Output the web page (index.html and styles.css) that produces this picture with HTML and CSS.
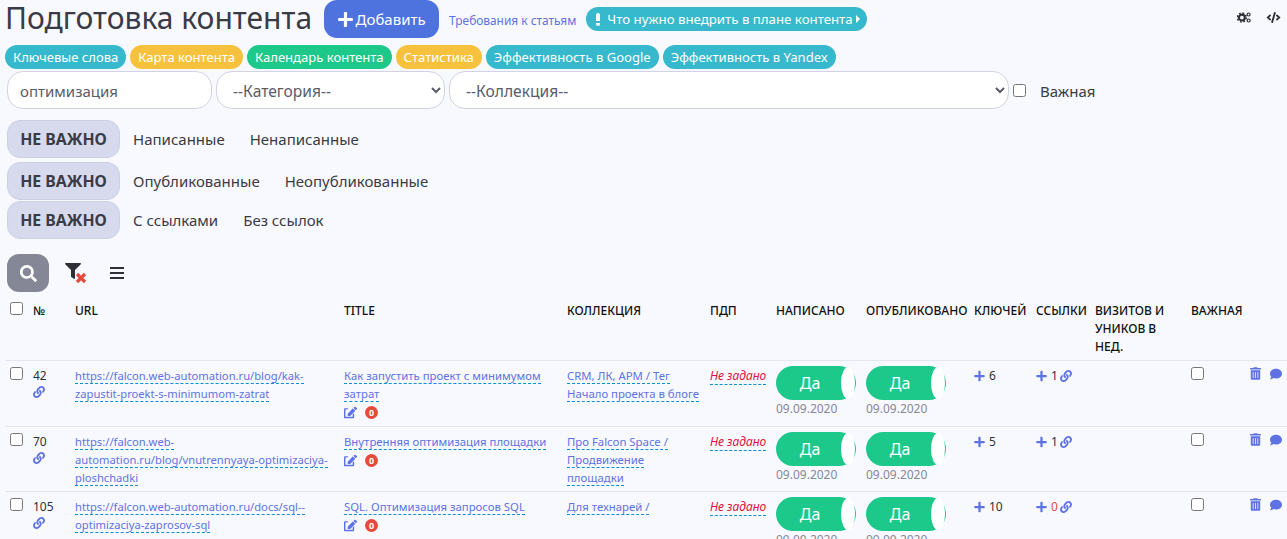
FILE: index.html
```html
<!DOCTYPE html>
<html lang="ru">
<head>
<meta charset="utf-8">
<title>Подготовка контента</title>
<link rel="stylesheet" href="styles.css">
</head>
<body>
<svg class="defs" width="0" height="0">
<symbol id="i-plus" viewBox="0 0 448 512"><path d="M416 208H272V64c0-17.67-14.33-32-32-32h-32c-17.67 0-32 14.33-32 32v144H32c-17.67 0-32 14.33-32 32v32c0 17.67 14.33 32 32 32h144v144c0 17.67 14.33 32 32 32h32c17.67 0 32-14.33 32-32V304h144c17.67 0 32-14.33 32-32v-32c0-17.67-14.33-32-32-32z"/></symbol>
<symbol id="i-search" viewBox="0 0 512 512"><path d="M505 442.7L405.3 343c-4.5-4.5-10.6-7-17-7H372c27.6-35.3 44-79.7 44-128C416 93.1 322.9 0 208 0S0 93.1 0 208s93.1 208 208 208c48.3 0 92.7-16.4 128-44v16.3c0 6.4 2.5 12.5 7 17l99.7 99.7c9.4 9.4 24.6 9.4 33.9 0l28.3-28.3c9.4-9.4 9.4-24.6.1-34zM208 336c-70.7 0-128-57.2-128-128 0-70.7 57.2-128 128-128 70.7 0 128 57.2 128 128 0 70.7-57.2 128-128 128z"/></symbol>
<symbol id="i-trash" viewBox="0 0 448 512"><path d="M32 464a48 48 0 0 0 48 48h288a48 48 0 0 0 48-48V128H32zm272-256a16 16 0 0 1 32 0v224a16 16 0 0 1-32 0zm-96 0a16 16 0 0 1 32 0v224a16 16 0 0 1-32 0zm-96 0a16 16 0 0 1 32 0v224a16 16 0 0 1-32 0zM432 32H312l-9.4-18.7A24 24 0 0 0 281.1 0H166.8a23.72 23.72 0 0 0-21.4 13.3L136 32H16A16 16 0 0 0 0 48v32a16 16 0 0 0 16 16h416a16 16 0 0 0 16-16V48a16 16 0 0 0-16-16z"/></symbol>
<symbol id="i-comment" viewBox="0 0 512 512"><path d="M256 32C114.6 32 0 125.1 0 240c0 49.6 21.4 95 57 130.7C44.5 421.1 2.7 466 2.2 466.5c-2.2 2.3-2.8 5.7-1.5 8.7S4.8 480 8 480c66.3 0 116-31.8 140.6-51.4 32.7 12.3 69 19.4 107.4 19.4 141.4 0 256-93.1 256-208S397.4 32 256 32z"/></symbol>
<symbol id="i-link" viewBox="0 0 512 512"><path d="M326.612 185.391c59.747 59.809 58.927 155.698.36 214.59-.11.12-.24.25-.36.37l-67.2 67.2c-59.27 59.27-155.699 59.262-214.96 0-59.27-59.26-59.27-155.7 0-214.96l37.106-37.106c9.84-9.84 26.786-3.3 27.294 10.606.648 17.722 3.826 35.527 9.69 52.721 1.986 5.822.567 12.262-3.783 16.612l-13.087 13.087c-28.026 28.026-28.905 73.66-1.155 101.96 28.024 28.579 74.086 28.749 102.325.51l67.2-67.19c28.191-28.191 28.073-73.757 0-101.83-3.701-3.694-7.429-6.564-10.341-8.569a16.037 16.037 0 0 1-6.947-12.606c-.396-10.567 3.348-21.456 11.698-29.806l21.054-21.055c5.521-5.521 14.182-6.199 20.584-1.731a152.482 152.482 0 0 1 20.522 17.197zM467.547 44.449c-59.261-59.262-155.69-59.27-214.96 0l-67.2 67.2c-.12.12-.25.25-.36.37-58.566 58.892-59.387 154.781.36 214.59a152.454 152.454 0 0 0 20.521 17.196c6.402 4.468 15.064 3.789 20.584-1.731l21.054-21.055c8.35-8.35 12.094-19.239 11.698-29.806a16.037 16.037 0 0 0-6.947-12.606c-2.912-2.005-6.64-4.875-10.341-8.569-28.073-28.073-28.191-73.639 0-101.83l67.2-67.19c28.239-28.239 74.3-28.069 102.325.51 27.75 28.3 26.872 73.934-1.155 101.96l-13.087 13.087c-4.35 4.35-5.769 10.79-3.783 16.612 5.864 17.194 9.042 34.999 9.69 52.721.509 13.906 17.454 20.446 27.294 10.606l37.106-37.106c59.271-59.259 59.271-155.699.001-214.959z"/></symbol>
<symbol id="i-edit" viewBox="0 0 576 512"><path d="M402.6 83.2l90.2 90.2c3.8 3.8 3.8 10 0 13.8L274.4 405.6l-92.8 10.3c-12.4 1.4-22.9-9.1-21.5-21.5l10.3-92.8L388.8 83.2c3.8-3.8 10-3.8 13.8 0zm162-22.9l-48.8-48.8c-15.2-15.2-39.9-15.2-55.2 0l-35.4 35.4c-3.8 3.8-3.8 10 0 13.8l90.2 90.2c3.8 3.8 10 3.8 13.8 0l35.4-35.4c15.2-15.3 15.2-40 0-55.2zM384 346.2V448H64V128h73.1c3.2 0 6.2-1.3 8.5-3.5l40-40c7.6-7.6 2.2-20.5-8.5-20.5H48C21.5 64 0 85.5 0 112v352c0 26.5 21.5 48 48 48h352c26.5 0 48-21.5 48-48V306.2c0-10.7-12.9-16-20.5-8.5l-40 40c-2.2 2.3-3.5 5.3-3.5 8.5z"/></symbol>
<symbol id="i-filter" viewBox="0 0 512 512"><path d="M487.976 0H24.028C2.71 0-8.047 25.866 7.058 40.971L192 225.941V432c0 7.831 3.821 15.17 10.237 19.662l80 55.98C298.02 518.69 320 507.493 320 487.98V225.941l184.947-184.97C520.021 25.896 509.338 0 487.976 0z"/></symbol>
<symbol id="i-code" viewBox="0 0 640 512"><path d="M278.9 511.5l-61-17.7c-6.4-1.8-10-8.5-8.2-14.9L346.2 8.7c1.8-6.4 8.5-10 14.9-8.2l61 17.7c6.4 1.8 10 8.5 8.2 14.9L293.8 503.3c-1.9 6.4-8.5 10.1-14.9 8.2zm-114-112.2l43.5-46.4c4.6-4.9 4.3-12.7-.8-17.2L117 256l90.6-79.7c5.1-4.5 5.5-12.3.8-17.2l-43.5-46.4c-4.5-4.8-12.1-5.1-17-.5L3.8 247.2c-5.1 4.7-5.1 12.8 0 17.5l144.1 135.1c4.9 4.6 12.5 4.4 17-.5zm327.2.6l144.1-135.1c5.1-4.7 5.1-12.8 0-17.5L492.1 112.1c-4.8-4.5-12.4-4.3-17 .5L431.6 159c-4.6 4.9-4.3 12.7.8 17.2L523 256l-90.6 79.7c-5.1 4.5-5.5 12.3-.8 17.2l43.5 46.4c4.5 4.9 12.1 5.1 17 .6z"/></symbol>
</svg>

<header class="top">
  <h1 class="title">Подготовка контента</h1>
  <button class="add-btn" type="button"><svg class="ic-add"><use href="#i-plus"/></svg>Добавить</button>
  <a class="req" href="#">Требования к статьям</a>
  <a class="pill pill-info pill-wide" href="#"><span class="excl"></span>Что нужно внедрить в плане контента<span class="caret"></span></a>
  <div class="top-tools">
    <svg class="ic-cogs" viewBox="0 0 20 14">
      <circle cx="6.5" cy="7" r="3.9" fill="none" stroke="#2f3037" stroke-width="2.8"/>
      <circle cx="6.5" cy="7" r="6" fill="none" stroke="#2f3037" stroke-width="2" stroke-dasharray="2.4 2.31"/>
      <circle cx="15.5" cy="3" r="2" fill="none" stroke="#2f3037" stroke-width="1.6"/>
      <circle cx="15.5" cy="11" r="2" fill="none" stroke="#2f3037" stroke-width="1.6"/>
    </svg>
    <svg class="ic-code"><use href="#i-code"/></svg>
  </div>
</header>

<nav class="pills">
  <a class="pill pill-info" href="#">Ключевые слова</a>
  <a class="pill pill-warn" href="#">Карта контента</a>
  <a class="pill pill-ok" href="#">Календарь контента</a>
  <a class="pill pill-warn" href="#">Статистика</a>
  <a class="pill pill-info" href="#">Эффективность в Google</a>
  <a class="pill pill-info" href="#">Эффективность в Yandex</a>
</nav>

<form class="filters">
  <input class="field f-search" type="text" value="оптимизация">
  <select class="field f-cat"><option>--Категория--</option></select>
  <select class="field f-col"><option>--Коллекция--</option></select>
  <input class="check" type="checkbox">
  <label class="imp-label">Важная</label>
</form>

<div class="seg seg-1"><span class="seg-on">НЕ ВАЖНО</span><span class="seg-a">Написанные</span><span>Ненаписанные</span></div>
<div class="seg seg-2"><span class="seg-on">НЕ ВАЖНО</span><span class="seg-a">Опубликованные</span><span>Неопубликованные</span></div>
<div class="seg seg-3"><span class="seg-on">НЕ ВАЖНО</span><span class="seg-a">С ссылками</span><span>Без ссылок</span></div>

<div class="tools">
  <button class="search-btn" type="button"><svg class="ic-search"><use href="#i-search"/></svg></button>
  <span class="filter-x">
    <svg class="ic-filter"><use href="#i-filter"/></svg>
    <svg class="ic-x" viewBox="0 0 12 12"><path d="M2 2l8 8M10 2l-8 8" stroke="#e74a3b" stroke-width="3.2" fill="none"/></svg>
  </span>
  <span class="bars"><i></i><i></i><i></i></span>
</div>

<div class="table-wrap">
<table class="grid">
  <colgroup>
    <col class="c1"><col class="c2"><col class="c3"><col class="c4"><col class="c5"><col class="c6"><col class="c7"><col class="c8"><col class="c9"><col class="c10"><col class="c11"><col class="c12"><col class="c13">
  </colgroup>
  <thead>
    <tr>
      <th><input class="check" type="checkbox"></th><th>№</th><th>URL</th><th>TITLE</th><th>КОЛЛЕКЦИЯ</th><th>ПДП</th><th>НАПИСАНО</th><th>ОПУБЛИКОВАНО</th><th>КЛЮЧЕЙ</th><th>ССЫЛКИ</th><th>ВИЗИТОВ И УНИКОВ В НЕД.</th><th>ВАЖНАЯ</th><th></th>
    </tr>
  </thead>
  <tbody>
    <tr>
      <td><input class="check" type="checkbox"></td>
      <td>42<svg class="ic-blue ic-num"><use href="#i-link"/></svg></td>
      <td><a class="dl dl-url" href="#">https://falcon.web-automation.ru/blog/kak-zapustit-proekt-s-minimumom-zatrat</a></td>
      <td><a class="dl" href="#">Как запустить проект с минимумом затрат</a><div class="meta"><svg class="ic-blue ic-edit"><use href="#i-edit"/></svg><span class="badge">0</span></div></td>
      <td><a class="dl" href="#">CRM, ЛК, АРМ / Тег</a><br><a class="dl" href="#">Начало проекта в блоге</a></td>
      <td><a class="dl unset" href="#">Не задано</a></td>
      <td><div class="toggle">Да<span class="knob"></span></div><div class="date">09.09.2020</div></td>
      <td><div class="toggle">Да<span class="knob"></span></div><div class="date">09.09.2020</div></td>
      <td><svg class="ic-blue ic-plus"><use href="#i-plus"/></svg>6</td>
      <td><svg class="ic-blue ic-plus"><use href="#i-plus"/></svg>1<svg class="ic-blue ic-lnk"><use href="#i-link"/></svg></td>
      <td></td>
      <td><input class="check" type="checkbox"></td>
      <td class="acts"><svg class="ic-blue ic-trash"><use href="#i-trash"/></svg><svg class="ic-blue ic-comment"><use href="#i-comment"/></svg></td>
    </tr>
    <tr>
      <td><input class="check" type="checkbox"></td>
      <td>70<svg class="ic-blue ic-num"><use href="#i-link"/></svg></td>
      <td><a class="dl dl-url" href="#">https://falcon.web-automation.ru/blog/vnutrennyaya-optimizaciya-ploshchadki</a></td>
      <td><a class="dl" href="#">Внутренняя оптимизация площадки</a><div class="meta"><svg class="ic-blue ic-edit"><use href="#i-edit"/></svg><span class="badge">0</span></div></td>
      <td><a class="dl" href="#">Про Falcon Space / Продвижение площадки</a></td>
      <td><a class="dl unset" href="#">Не задано</a></td>
      <td><div class="toggle">Да<span class="knob"></span></div><div class="date">09.09.2020</div></td>
      <td><div class="toggle">Да<span class="knob"></span></div><div class="date">09.09.2020</div></td>
      <td><svg class="ic-blue ic-plus"><use href="#i-plus"/></svg>5</td>
      <td><svg class="ic-blue ic-plus"><use href="#i-plus"/></svg>1<svg class="ic-blue ic-lnk"><use href="#i-link"/></svg></td>
      <td></td>
      <td><input class="check" type="checkbox"></td>
      <td class="acts"><svg class="ic-blue ic-trash"><use href="#i-trash"/></svg><svg class="ic-blue ic-comment"><use href="#i-comment"/></svg></td>
    </tr>
    <tr>
      <td><input class="check" type="checkbox"></td>
      <td>105<svg class="ic-blue ic-num"><use href="#i-link"/></svg></td>
      <td><a class="dl dl-url" href="#">https://falcon.web-automation.ru/docs/sql--optimizaciya-zaprosov-sql</a></td>
      <td><a class="dl" href="#">SQL. Оптимизация запросов SQL</a><div class="meta"><svg class="ic-blue ic-edit"><use href="#i-edit"/></svg><span class="badge">0</span></div></td>
      <td><a class="dl" href="#">Для технарей /</a></td>
      <td><a class="dl unset" href="#">Не задано</a></td>
      <td><div class="toggle">Да<span class="knob"></span></div><div class="date">09.09.2020</div></td>
      <td><div class="toggle">Да<span class="knob"></span></div><div class="date">09.09.2020</div></td>
      <td><svg class="ic-blue ic-plus"><use href="#i-plus"/></svg>10</td>
      <td><svg class="ic-blue ic-plus"><use href="#i-plus"/></svg><span class="zero">0</span><svg class="ic-blue ic-lnk"><use href="#i-link"/></svg></td>
      <td></td>
      <td><input class="check" type="checkbox"></td>
      <td class="acts"><svg class="ic-blue ic-trash"><use href="#i-trash"/></svg><svg class="ic-blue ic-comment"><use href="#i-comment"/></svg></td>
    </tr>
  </tbody>
</table>
</div>
</body>
</html>
```
FILE: styles.css
```css
html, body { margin: 0; height: 539px; overflow: hidden; }
body {
  background: #f8f9fe;
  font-family: "Noto Sans", "Open Sans", sans-serif;
  color: #3a3b45;
  font-size: 15px;
}
a { text-decoration: none; }
.defs { position: absolute; }

.top { display: flex; align-items: flex-start; height: 45px; padding-left: 5px; }
.title { margin: 0 12px 0 0; font-size: 30px; font-weight: 400; line-height: 36px; white-space: nowrap; color: #3a3b45; }
.add-btn {
  display: flex; align-items: center; justify-content: center;
  width: 115px; height: 38px; padding: 0; border: 0; border-radius: 13px;
  background: #4e73df; color: #fff; font: inherit; font-size: 15px;
}
.ic-add { width: 15px; height: 17px; fill: #fff; margin-right: 3px; }
.req { margin: 11px 10px 0 10px; font-size: 11.9px; line-height: 18px; color: #5e72e4; white-space: nowrap; }
.top-tools { margin-left: auto; display: flex; gap: 14px; align-items: center; padding: 12px 6px 0 0; }
.ic-cogs { width: 15px; height: 11px; }
.ic-code { width: 15px; height: 11px; fill: #2f3037; }

.pill {
  display: inline-flex; align-items: center; height: 24px; padding: 0 8px;
  border-radius: 12px; color: #fff; font-size: 13.05px; white-space: nowrap;
}
.pill-info { background: #36b9cc; }
.pill-warn { background: #f6c23e; }
.pill-ok { background: #1cc88a; }
.pill-wide { margin-top: 7px; padding: 0 6px 0 5px; font-size: 13.25px; }
.excl { width: 4px; height: 13px; margin: 0 7px 0 5px; border-radius: 2px; background: linear-gradient(#fff 0 8px, transparent 8px 10px, #fff 10px); }
.caret { width: 0; height: 0; margin: 0 1px 0 3px; border-left: 4px solid #fff; border-top: 4px solid transparent; border-bottom: 4px solid transparent; }

.pills { display: flex; gap: 4px; height: 26px; padding-left: 5px; }

.filters { display: flex; align-items: center; gap: 4px; padding-left: 7px; height: 38px; }
.field {
  box-sizing: border-box; height: 38px; margin: 0; border: 1px solid #d1d3e2; border-radius: 16px;
  background-color: #fff; color: #5a5c69; font: inherit; font-size: 15px; padding: 2px 12px 0;
}
select.field { font-size: 15.6px; }
.f-search { width: 205px; }
.f-cat { width: 229px; }
.f-col { width: 560px; }
.check { width: 13px; height: 13px; margin: 0; }
.imp-label { margin: 2px 0 0 10px; }

.seg { display: flex; align-items: center; height: 38px; padding-left: 7px; font-size: 15px; color: #3a3b45; }
.seg-1 { margin-top: 11px; }
.seg-2 { margin-top: 4px; }
.seg-3 { margin-top: 1px; }
.seg-on {
  box-sizing: border-box; display: flex; align-items: center; justify-content: center;
  width: 113px; height: 38px; border-radius: 13px; background: #d6daec; border: 1px solid #ccd0e6;
  font-size: 15.8px; font-weight: 700; color: #3a3b45;
}
.seg-a { margin: 0 25px 0 13px; }

.tools { display: flex; align-items: center; height: 38px; margin-top: 15px; padding-left: 7px; }
.search-btn { width: 42px; height: 38px; padding: 0; border: 0; border-radius: 12px; background: #858796; display: flex; align-items: center; justify-content: center; }
.ic-search { width: 17px; height: 17px; fill: #fff; }
.filter-x { position: relative; width: 22px; height: 21px; margin-left: 16px; }
.ic-filter { position: absolute; left: 0; top: 0; width: 16px; height: 16px; fill: #2f3037; }
.ic-x { position: absolute; left: 10px; top: 9px; width: 12px; height: 12px; }
.bars { display: flex; flex-direction: column; gap: 3px; margin-left: 23px; }
.bars i { display: block; width: 14px; height: 2px; background: #2f3037; }

.table-wrap { margin-top: 4px; padding-left: 5px; width: 1282px; overflow: hidden; }
.grid { table-layout: fixed; width: 1300px; border-collapse: collapse; font-size: 12px; line-height: 18px; color: #2f3037; }
.c1 { width: 23px; } .c2 { width: 42px; } .c3 { width: 269px; } .c4 { width: 223px; } .c5 { width: 143px; }
.c6 { width: 66px; } .c7 { width: 90px; } .c8 { width: 108px; } .c9 { width: 62px; } .c10 { width: 59px; }
.c11 { width: 96px; } .c12 { width: 59px; } .c13 { width: 60px; }
.grid th { height: 64px; box-sizing: border-box; padding: 6px 5px 0; text-align: left; vertical-align: top; font-weight: 500; color: #111; }
.grid td { padding: 6px 5px 4px; vertical-align: top; border-top: 1px solid #e3e6f0; }
.dl { font-size: 11.35px; color: #5e72e4; border-bottom: 1px dashed #0a8fd0; overflow-wrap: anywhere; }
.dl-url { font-size: 11.2px; }
.unset { font-size: 12px; color: #e0103c; font-style: italic; white-space: nowrap; }
.ic-blue { fill: #5e72e4; }
.ic-num { display: block; width: 12px; height: 12px; margin-top: 1px; }
.meta { display: flex; align-items: center; gap: 8px; height: 19px; }
.ic-edit { width: 13px; height: 13px; }
.badge { display: flex; align-items: center; justify-content: center; width: 13px; height: 13px; border-radius: 7px; background: #e74a3b; color: #fff; font-size: 9px; line-height: 13px; font-weight: 700; }
.toggle { position: relative; box-sizing: border-box; width: 80px; height: 34px; margin-top: -1px; border-radius: 17px; background: #1cc88a; color: #fff; font-size: 16px; line-height: 34px; text-align: center; padding-right: 12px; }
.knob { position: absolute; right: 1px; top: 1px; width: 14px; height: 32px; border-radius: 50%; background: #fff; }
.date { color: #858796; }
.ic-plus { width: 11px; height: 12px; margin-right: 4px; vertical-align: -2px; }
.ic-lnk { width: 12px; height: 12px; margin-left: 2px; vertical-align: -2px; }
.zero { color: #e74a3b; }
.acts { white-space: nowrap; padding-left: 6px; }
.ic-trash { width: 11px; height: 13px; margin-right: 9px; }
.ic-comment { width: 12px; height: 12px; }
```
